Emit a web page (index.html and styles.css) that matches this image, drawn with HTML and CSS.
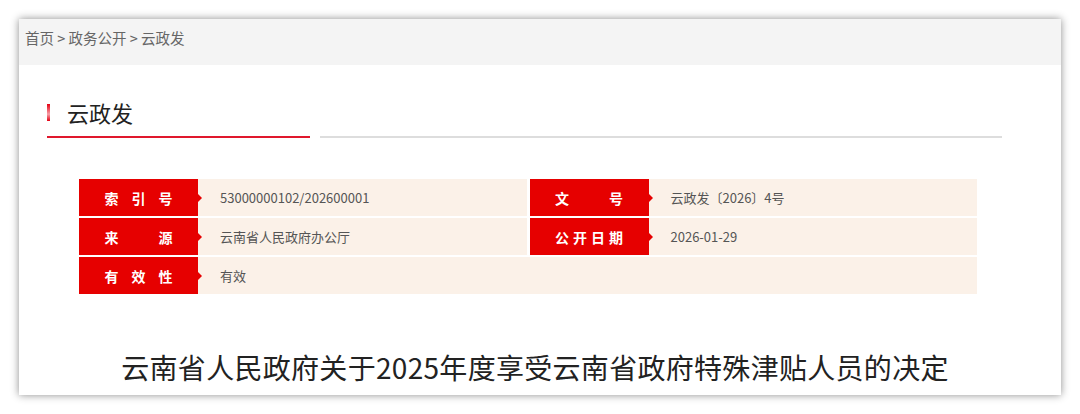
FILE: index.html
```html
<!DOCTYPE html>
<html>
<head>
    <meta charset="utf-8" />
    <title>云政发</title>
    <link rel="stylesheet" href="styles.css">
</head>
<body>
<div class="card">
    <div class="crumb">首页 &gt; 政务公开 &gt; 云政发</div>
    <div class="main">
        <div class="title">
            <span class="mark"></span>
            <h2>云政发</h2>
        </div>
        <div class="lines">
            <span class="red"></span>
            <span class="grey"></span>
        </div>
        <div class="info">
            <div class="cell">
                <div class="label"><span>索引号</span></div>
                <div class="value">53000000102/202600001</div>
            </div>
            <div class="cell">
                <div class="label"><span>文号</span></div>
                <div class="value">云政发〔2026〕4号</div>
            </div>
            <div class="cell">
                <div class="label"><span>来源</span></div>
                <div class="value">云南省人民政府办公厅</div>
            </div>
            <div class="cell">
                <div class="label"><span>公开日期</span></div>
                <div class="value">2026-01-29</div>
            </div>
            <div class="cell wide">
                <div class="label"><span>有效性</span></div>
                <div class="value">有效</div>
            </div>
        </div>
        <h1 class="headline">云南省人民政府关于2025年度享受云南省政府特殊津贴人员的决定</h1>
    </div>
</div>
</body>
</html>
```

FILE: styles.css
```css
*{margin:0;padding:0;box-sizing:border-box;}
body{background:#fff;font-family:"Noto Sans CJK SC","Microsoft YaHei",sans-serif;color:#333;}
.card{
    margin:19px;
    width:1042px;
    height:376px;
    background:#fff;
    box-shadow:0 0 8px rgba(0,0,0,.45);
    overflow:hidden;
}
.crumb{
    height:46px;
    line-height:38px;
    padding-left:6px;
    background:#f4f4f4;
    font-size:14.5px;
    color:#666;
}
.main{padding:0 59px 0 28px;}
.title{
    display:flex;
    align-items:center;
    margin-top:34px;
    height:26px;
}
.mark{
    width:3px;
    height:17px;
    background:linear-gradient(#e60012,#f6a0a8 60%,#e60012);
}
.title h2{
    margin-left:17px;
    font-size:22px;
    font-weight:400;
    color:#222;
    line-height:26px;
}
.lines{display:flex;margin-top:11px;gap:10px;}
.lines .red{width:263px;height:2px;background:#e0182d;}
.lines .grey{flex:1;height:2px;background:#ddd;}
.info{
    display:grid;
    grid-template-columns:1fr 1fr;
    column-gap:3px;
    row-gap:2px;
    width:898px;
    margin:41px 0 0 32px;
}
.cell{display:flex;height:37px;background:#fbf1e8;}
.cell.wide{grid-column:1 / 3;}
.label{
    position:relative;
    width:119px;
    background:#e60000;
    display:flex;
    align-items:center;
    justify-content:center;
}
.label span{
    width:68px;
    color:#fff;
    font-size:14px;
    font-weight:700;
    text-align:justify;
    text-align-last:justify;
}
.label:after{
    content:"";
    position:absolute;
    right:-4px;
    top:50%;
    margin-top:-4px;
    border-left:4px solid #e60000;
    border-top:4px solid transparent;
    border-bottom:4px solid transparent;
}
.value{
    display:flex;
    align-items:center;
    padding-left:22px;
    font-size:13px;
    color:#555;
}
.headline{
    margin-top:53px;
    text-align:center;
    font-size:28px;
    line-height:40px;
    font-weight:400;
    letter-spacing:.3px;
    color:#222;
    padding-left:21px;
}
```
